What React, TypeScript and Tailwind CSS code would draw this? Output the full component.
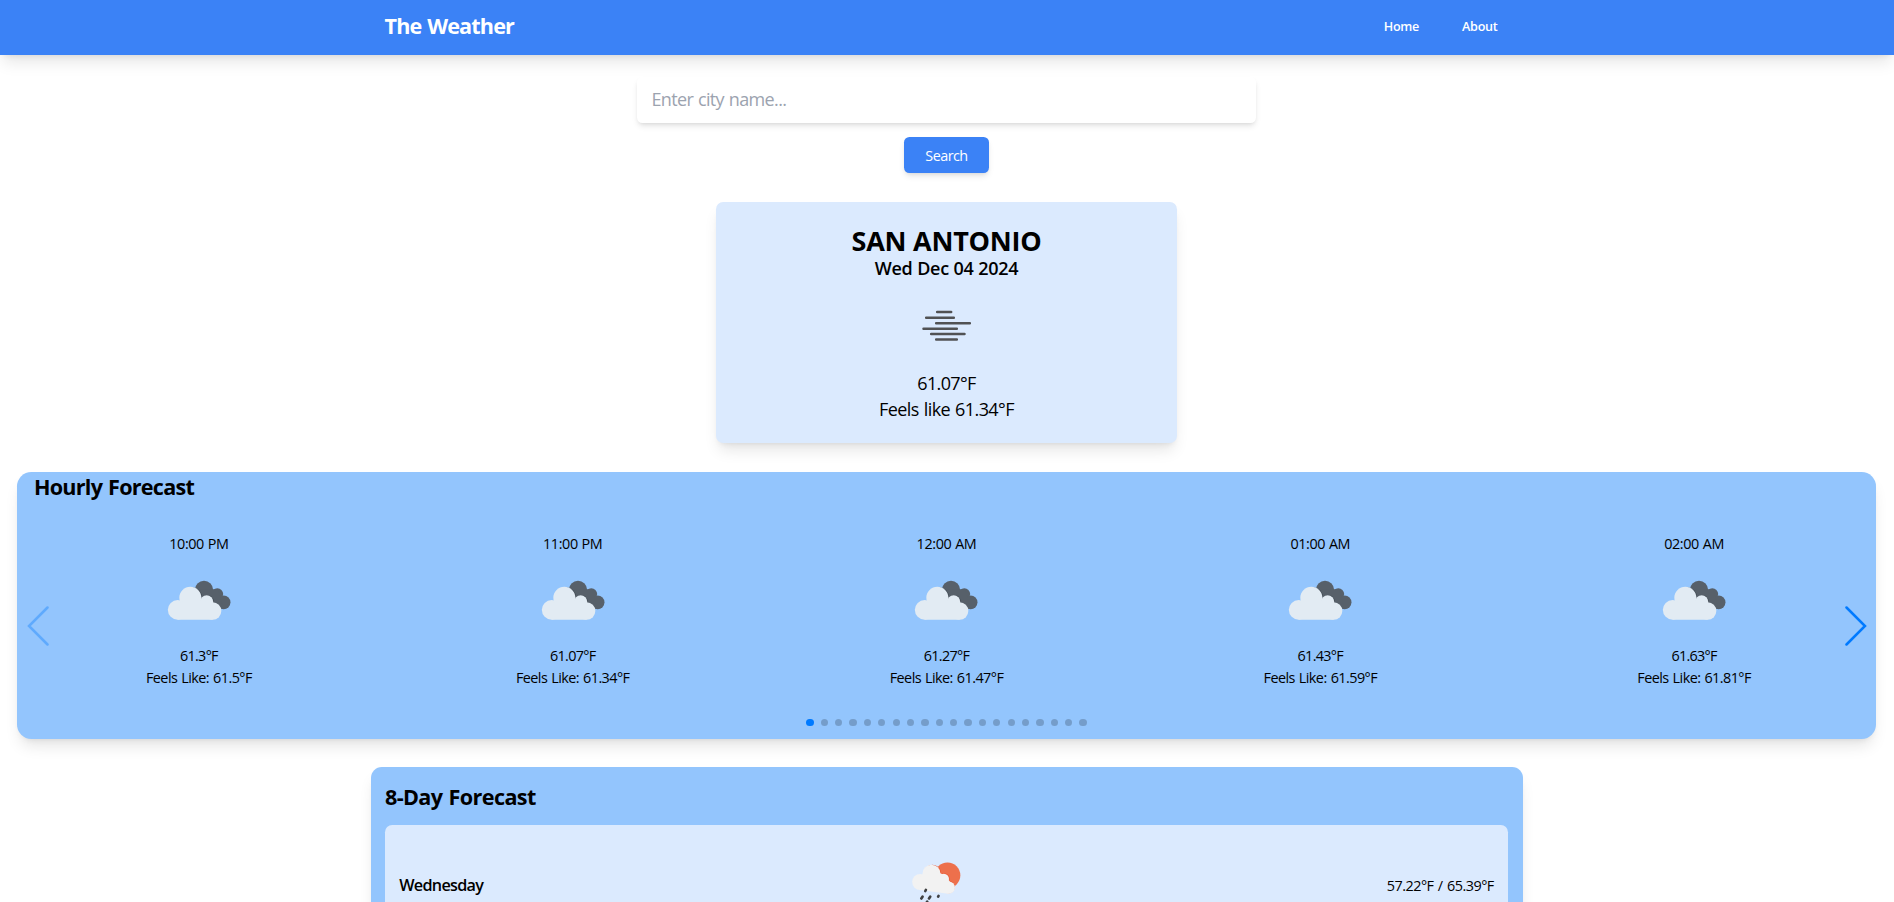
import React from "react";

const hours = [
  { time: "10:00 PM", temp: "61.3°F", feels: "61.5°F" },
  { time: "11:00 PM", temp: "61.07°F", feels: "61.34°F" },
  { time: "12:00 AM", temp: "61.27°F", feels: "61.47°F" },
  { time: "01:00 AM", temp: "61.43°F", feels: "61.59°F" },
  { time: "02:00 AM", temp: "61.63°F", feels: "61.81°F" },
];

const days = [{ name: "Wednesday", low: "57.22°F", high: "65.39°F" }];

function CloudsIcon() {
  return (
    <svg viewBox="13 -30 270 270" className="size-[90px]">
      <g fill="#57606a">
        <circle cx="163" cy="75" r="27.5" />
        <circle cx="203" cy="87" r="17.5" />
        <circle cx="222" cy="112" r="20.5" />
        <path d="M150 75 L205 72 L222 132 L190 125 Z" />
      </g>
      <g fill="#434c56">
        <circle cx="126.5" cy="97.5" r="31" />
        <circle cx="173" cy="110" r="20" />
      </g>
      <g fill="#e2ebf3">
        <circle cx="84" cy="134.5" r="29.5" />
        <circle cx="122" cy="98" r="33" />
        <circle cx="171" cy="111" r="20" />
        <circle cx="189" cy="138" r="26" />
        <path d="M84 164 V115 L122 98 L171 111 L189 125 V164 Z" />
      </g>
    </svg>
  );
}

function MistIcon() {
  return (
    <svg viewBox="-10.5 -55 270 270" className="size-[90px]">
      <path
        d="M95 38H137M62 55H145M92 72H193M54 88H154M77 104H177M92 120.5H154"
        fill="none"
        stroke="#515254"
        strokeWidth="7.5"
        strokeLinecap="round"
      />
    </svg>
  );
}

function SunRainIcon() {
  return (
    <svg viewBox="91.5 58 270 270" className="size-[90px]">
      <circle cx="264" cy="167" r="38.5" fill="#ed704c" />
      <g fill="#e85a38">
        <circle cx="219" cy="161" r="26" />
        <circle cx="254" cy="177" r="16.5" />
        <circle cx="267" cy="202" r="19" />
      </g>
      <g fill="#f2f2f2">
        <circle cx="182" cy="187" r="24" />
        <circle cx="216" cy="162" r="27" />
        <circle cx="253" cy="178" r="15.5" />
        <circle cx="268" cy="204" r="18.5" />
        <path d="M180 211 L182 170 L216 150 L253 165 L275 190 L267 222.5 Z" />
      </g>
      <path
        d="M199 211L197.5 214M189 231L185.500 236.500M212 231L208.500 236.500M237 229L236 231M203 246L200 251"
        fill="none"
        stroke="#3f4042"
        strokeWidth="8"
        strokeLinecap="round"
      />
    </svg>
  );
}

export default function App() {
  return (
    <div className="flex h-screen flex-col overflow-hidden bg-white font-['Open_Sans','Noto_Sans',sans-serif] text-[14.4px] leading-[21.6px] text-black">
      <header className="h-[55px] shrink-0 bg-[#3b82f6] pr-px text-white shadow-lg">
        <div className="mx-auto flex w-[1124px] justify-between">
          <h1 className="pt-[12px] text-[21.6px] leading-[28.8px] font-bold tracking-[-0.85px] [word-spacing:1px]">
            The Weather
          </h1>
          <nav className="flex gap-[43px] pt-[16px] pr-[11px] text-[12.6px] font-semibold tracking-[-0.28px]">
            <a>Home</a>
            <a>About</a>
          </nav>
        </div>
      </header>

      <div className="mt-[21.6px] flex shrink-0 flex-col items-center pr-px">
        <input
          className="h-[46.8px] w-[619px] rounded-[5.4px] bg-white px-[14.4px] pb-[2px] text-[18px] tracking-[-0.64px] shadow-md [word-spacing:0.8px] placeholder:text-[#9ca3af]"
          placeholder="Enter city name..."
        />
        <button className="mt-[13.6px] h-[36px] w-[85px] rounded-[5.4px] bg-[#3b82f6] pt-[1px] text-[14.4px] tracking-[-0.55px] text-white shadow-md">
          Search
        </button>
      </div>

      <div className="mt-[29px] flex shrink-0 justify-center pr-px">
        <section className="flex h-[241px] w-[461px] flex-col items-center rounded-[7.2px] bg-[#dbeafe] pt-[23.2px] text-[18px] leading-[25.2px] shadow-lg">
          <h2 className="text-[27px] leading-[32.4px] font-bold tracking-[-0.24px]">SAN ANTONIO</h2>
          <p className="-mt-[1.6px] font-semibold tracking-[-0.3px] [word-spacing:0.4px]">Wed Dec 04 2024</p>
          <MistIcon />
          <p className="-mt-[0.4px] tracking-[-0.65px]">61.07°F</p>
          <p className="mt-[0.6px] tracking-[-0.57px] [word-spacing:0.8px]">Feels like 61.34°F</p>
        </section>
      </div>

      <section className="relative mr-[18px] ml-[17px] mt-[29px] flex h-[267px] shrink-0 flex-col rounded-[14.4px] bg-[#93c5fd] shadow-lg">
        <h2 className="pt-[1px] pl-[17px] text-[21.6px] leading-[28.8px] font-bold tracking-[-0.76px] [word-spacing:1px]">
          Hourly Forecast
        </h2>
        <div className="mt-[31px] grid grid-cols-5 gap-[10px]">
          {hours.map((h) => (
            <div key={h.time} className="flex flex-col items-center">
              <p className="mb-[1px] tracking-[-0.4px] [word-spacing:0.5px]">{h.time}</p>
              <CloudsIcon />
              <p className="tracking-[-0.7px]">{h.temp}</p>
              <p className="tracking-[-0.55px] [word-spacing:0.8px]">Feels Like: {h.feels}</p>
            </div>
          ))}
        </div>
        <div className="mt-[30px] flex justify-center gap-[7.2px]">
          {Array.from({ length: 20 }, (_, i) => (
            <span
              key={i}
              className={i === 0 ? "size-[7.2px] rounded-full bg-[#007aff]" : "size-[7.2px] rounded-full bg-black/20"}
            />
          ))}
        </div>
        <svg viewBox="0 0 22 40" className="absolute top-[134px] left-[9.5px] h-[40px] w-[22px] opacity-35">
          <path d="M20.5 1.5L2 20L20.5 38.5" fill="none" stroke="#007aff" strokeWidth="2.5" strokeLinecap="round" />
        </svg>
        <svg viewBox="0 0 22 40" className="absolute top-[134px] right-[9.5px] h-[40px] w-[22px]">
          <path d="M1.5 1.5L20 20L1.5 38.5" fill="none" stroke="#007aff" strokeWidth="2.5" strokeLinecap="round" />
        </svg>
      </section>

      <div className="mt-[28px] flex shrink-0 justify-center pr-px">
        <section className="w-[1152px] rounded-[10.8px] bg-[#93c5fd] p-[14.4px] shadow-lg">
          <h2 className="pt-[2px] text-[21.6px] leading-[28.8px] font-bold tracking-[-0.6px] [word-spacing:1px]">
            8-Day Forecast
          </h2>
          {days.map((d) => (
            <div
              key={d.name}
              className="mt-[12.8px] flex items-center justify-between rounded-[7.2px] bg-[#dbeafe] p-[14.4px]"
            >
              <p className="pt-[2px] text-[16.2px] font-semibold tracking-[-0.72px]">{d.name}</p>
              <SunRainIcon />
              <p className="pt-[2px] tracking-[-0.52px] [word-spacing:1.2px]">
                {d.low} / {d.high}
              </p>
            </div>
          ))}
        </section>
      </div>
    </div>
  );
}
